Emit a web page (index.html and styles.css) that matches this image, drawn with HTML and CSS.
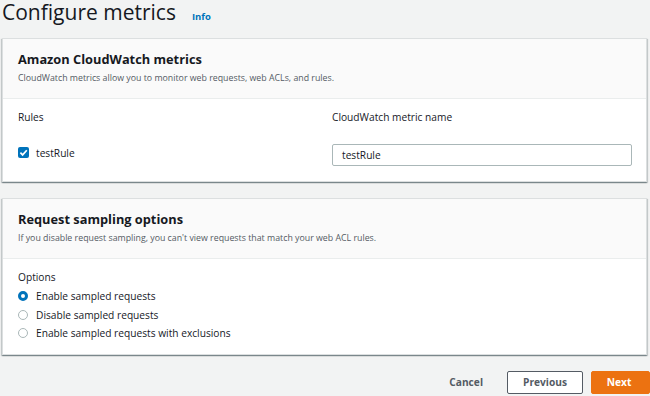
FILE: index.html
```html
<!DOCTYPE html>
<html>
<head>
<meta charset="utf-8">
<link rel="stylesheet" href="styles.css">
</head>
<body>
<div class="page">
  <div class="page-header">
    <h1 class="page-title">Configure metrics</h1>
    <a class="info">Info</a>
  </div>

  <section class="card">
    <div class="card-header">
      <h2 class="card-title">Amazon CloudWatch metrics</h2>
      <p class="card-desc">CloudWatch metrics allow you to monitor web requests, web ACLs, and rules.</p>
    </div>
    <div class="card-body metrics-grid">
      <div class="col-label">Rules</div>
      <div class="col-label">CloudWatch metric name</div>
      <label class="check-row">
        <span class="checkbox"><svg viewBox="0 0 11 11" width="11" height="11"><path d="M2.4 5.7 L4.6 7.9 L8.8 3.3" fill="none" stroke="#fff" stroke-width="1.7"/></svg></span>
        <span>testRule</span>
      </label>
      <div class="input">testRule</div>
    </div>
  </section>

  <section class="card card-second">
    <div class="card-header">
      <h2 class="card-title">Request sampling options</h2>
      <p class="card-desc">If you disable request sampling, you can't view requests that match your web ACL rules.</p>
    </div>
    <div class="card-body options-body">
      <div class="col-label options-label">Options</div>
      <div class="radio-row"><span class="radio checked"></span><span>Enable sampled requests</span></div>
      <div class="radio-row"><span class="radio"></span><span>Disable sampled requests</span></div>
      <div class="radio-row"><span class="radio"></span><span>Enable sampled requests with exclusions</span></div>
    </div>
  </section>

  <div class="actions">
    <button class="btn btn-link">Cancel</button>
    <button class="btn btn-normal">Previous</button>
    <button class="btn btn-primary">Next</button>
  </div>
</div>
</body>
</html>
```

FILE: styles.css
```css
* { box-sizing: border-box; }
html, body { margin: 0; padding: 0; }
body {
  background: #f2f3f3;
  font-family: "Open Sans", "Noto Sans", sans-serif;
  color: #16191f;
  width: 650px;
  height: 396px;
  overflow: hidden;
}
.page {
  padding: 0 3px 0 2px;
}
.page-header {
  display: flex;
  align-items: baseline;
  height: 38px;
}
.page-title {
  margin: 0;
  font-weight: 400;
  font-size: 21px;
  line-height: 24px;
  color: #16191f;
}
.info {
  margin-left: 16px;
  font-size: 9.5px;
  font-weight: 700;
  color: #0073bb;
}
.card {
  background: #fff;
  border: 1px solid #dcdfe0;
  box-shadow: 0 1px 1px 0 rgba(0, 28, 36, 0.3), 1px 1px 1px 0 rgba(0, 28, 36, 0.15), -1px 1px 1px 0 rgba(0, 28, 36, 0.15);
}
.card-second { margin-top: 16px; }
.card-header {
  background: #fafafa;
  border-bottom: 1px solid #eaeded;
  padding: 12px 16px 0 15px;
  height: 60px;
}
.card-title {
  margin: 0;
  font-size: 12.8px;
  font-weight: 700;
  line-height: 16px;
}
.card-desc {
  margin: 5px 0 0;
  font-size: 8.8px;
  line-height: 12px;
  color: #545b64;
}
.card-body {
  padding: 0 15px;
  font-size: 10.2px;
}
.metrics-grid {
  display: grid;
  grid-template-columns: 314px 300px;
  grid-template-rows: 32px 23px;
  align-content: start;
  height: 82px;
  padding-top: 10px;
}
.col-label {
  font-size: 10.2px;
  line-height: 16px;
  color: #16191f;
}
.check-row {
  display: flex;
  align-items: center;
  gap: 7px;
  font-size: 10.2px;
}
.checkbox {
  width: 11px;
  height: 11px;
  background: #0073bb;
  border-radius: 2px;
  display: inline-flex;
}
.input {
  height: 22px;
  margin-top: 3px;
  border: 1px solid #aab7b8;
  border-radius: 2px;
  padding: 0 9px;
  font-size: 10.2px;
  line-height: 20px;
}
.options-body {
  padding-top: 10px;
  padding-bottom: 11px;
}
.options-label { margin-bottom: 2px; }
.radio-row {
  display: flex;
  align-items: center;
  gap: 8px;
  height: 18.5px;
  font-size: 10.2px;
}
.radio {
  width: 10px;
  height: 10px;
  border-radius: 50%;
  border: 1px solid #aab7b8;
  background: #fff;
}
.radio.checked {
  border: 3px solid #0073bb;
}
.actions {
  display: flex;
  justify-content: flex-end;
  align-items: center;
  margin-top: 16px;
  margin-right: -3px;
}
.btn {
  font-family: inherit;
  font-size: 10.2px;
  font-weight: 700;
  height: 23px;
  padding: 0;
  border-radius: 2px;
  cursor: pointer;
}
.btn-link {
  background: none;
  border: none;
  color: #545b64;
  margin-right: 24px;
}
.btn-normal {
  background: #fff;
  border: 1px solid #545b64;
  color: #545b64;
  width: 76px;
  margin-right: 8px;
}
.btn-primary {
  background: #ec7211;
  border: 1px solid #ec7211;
  color: #fff;
  width: 59px;
  padding-right: 3px;
}
```
